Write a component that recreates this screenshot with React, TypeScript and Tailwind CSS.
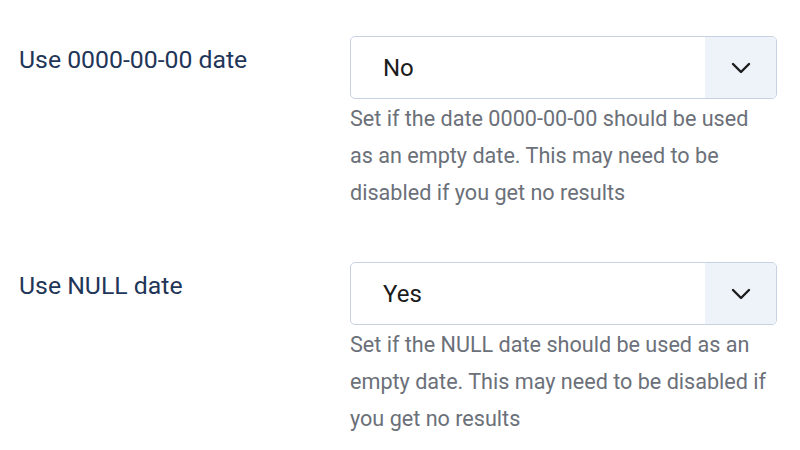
import React from 'react';

interface FieldProps {
    label: string;
    value: string;
    help: string;
}

function Chevron() {
    return (
        <svg width="20" height="12" viewBox="0 0 20 12" fill="none">
            <path d="M2 2l8 8 8-8" stroke="#1b1b1b" strokeWidth="2.4" strokeLinecap="round" strokeLinejoin="round" />
        </svg>
    );
}

function SelectField({ label, value, help }: FieldProps) {
    return (
        <div className="flex">
            <div className="w-[331px] shrink-0 pt-[9px] text-[24.8px] leading-[30px] text-[#1f3658]">{label}</div>
            <div className="w-[427px]">
                <div className="flex h-[63px] rounded-[5px] border border-[#c6d1e2] bg-white overflow-hidden">
                    <div className="flex-1 flex items-center pl-[32px] text-[24px] text-[#1b1b1b]">{value}</div>
                    <div className="w-[71px] flex items-center justify-center bg-[#eef3fa]">
                        <Chevron />
                    </div>
                </div>
                <p className="pt-[1px] pr-[5px] text-[21.6px] leading-[37px] text-[#6b7079]">{help}</p>
            </div>
        </div>
    );
}

export default function App() {
    return (
        <div className="w-[800px] h-[450px] bg-white px-[19px] pt-[36px] flex flex-col gap-[51px]" style={{ fontFamily: 'Roboto, "Liberation Sans", sans-serif' }}>
            <SelectField
                label="Use 0000-00-00 date"
                value="No"
                help="Set if the date 0000-00-00 should be used as an empty date. This may need to be disabled if you get no results"
            />
            <SelectField
                label="Use NULL date"
                value="Yes"
                help="Set if the NULL date should be used as an empty date. This may need to be disabled if you get no results"
            />
        </div>
    );
}
